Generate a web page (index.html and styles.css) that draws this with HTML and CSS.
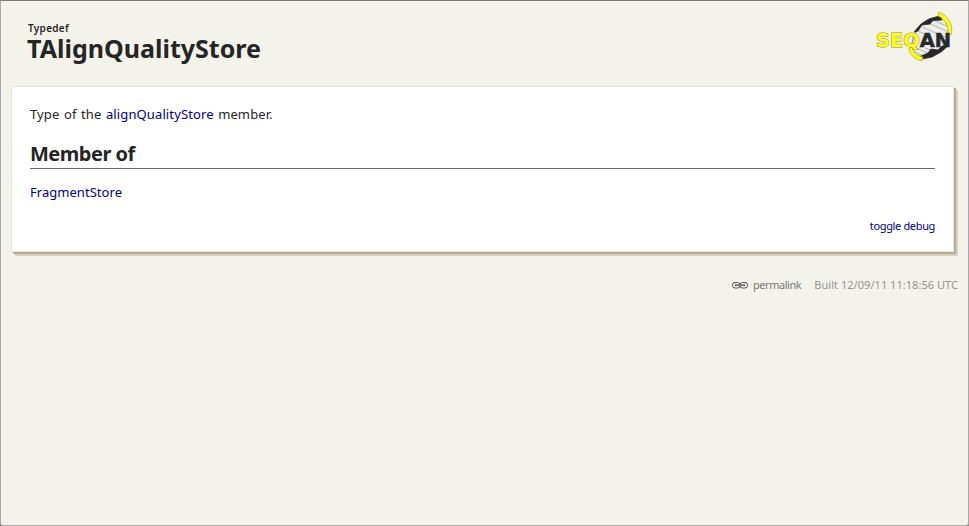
FILE: index.html
```
<!DOCTYPE html>
<html lang="en">
<head>
<meta charset="utf-8">
<title>TAlignQualityStore</title>
<link rel="stylesheet" href="styles.css">
</head>
<body>
<header class="header">
  <div class="titles">
    <div class="kind">Typedef</div>
    <h1 class="title">TAlignQualityStore</h1>
  </div>
  <svg class="logo" width="80" height="52" viewBox="0 0 80 52" role="img" aria-label="SeqAn">
    <path d="M38 42C35 32 38 20 47 12C55 5 64 3 71 7C77 17 74 30 64 38C56 44 45 47 38 42Z" fill="#ededeb" stroke="#666" stroke-width=".8"/>
    <g stroke="#aaa" stroke-width=".9" fill="none">
      <path d="M58 8L74 15M53 11L74 20M47 15L70 25M43 19L56 25M38 34L56 43M39 39L50 45M50 36L62 40"/>
    </g>
    <path d="M39 20L46 12L54 7L65 4L67 8L58 8.5L55 12L47 13L43 19Z" fill="#292829" stroke="#292829" stroke-width=".8"/>
    <path d="M46 44L53 41L56 37L63 38L67 34H73L66 40L57 45L47 47Z" fill="#292829" stroke="#292829" stroke-width=".8"/>
    <path d="M64 0C73 4 79 12 76 23L73 21C74 14 70 7 63 4Z" fill="#ffff16" stroke="#a8a420" stroke-width=".7"/>
    <path d="M37 35C39 42 43 44 48 45L47 49C39 47 34 42 34 36Z" fill="#ffff16" stroke="#a8a420" stroke-width=".7"/>
    <text class="logo-text" x="1" y="35" textLength="75" lengthAdjust="spacingAndGlyphs"><tspan class="logo-seq">SEQ</tspan><tspan class="logo-an">AN</tspan></text>
  </svg>
</header>
<main class="card">
  <p class="intro">Type of the <a href="#">alignQualityStore</a> member.</p>
  <h2 class="section">Member of</h2>
  <p class="member"><a href="#">FragmentStore</a></p>
  <p class="debug"><a href="#">toggle debug</a></p>
</main>
<footer class="footer">
  <a class="permalink" href="#">
    <svg width="16" height="8" viewBox="0 0 16 8" aria-hidden="true">
      <rect x=".5" y="1.5" width="7.5" height="5.5" rx="2.5" fill="none" stroke="#555" stroke-width="1"/>
      <rect x="8" y="1.5" width="7.5" height="5.5" rx="2.5" fill="none" stroke="#555" stroke-width="1"/>
      <path d="M3 4.2H13" stroke="#555" stroke-width="1.8"/>
      <path d="M4 4.2H12" stroke="#ccc" stroke-width=".5"/>
    </svg>
    <span>permalink</span>
  </a>
  <span class="built">Built 12/09/11 11:18:56 UTC</span>
</footer>
</body>
</html>
```

FILE: styles.css
```
* { box-sizing: border-box; }
html { background: #777; }
body {
  margin: 0;
  height: 526px;
  border: 1px solid #aaa8a8;
  border-top-color: #7d797b;
  border-radius: 0 0 3px 3px;
  background: #f4f3eb;
  color: #252525;
  font-family: "Noto Sans", "Open Sans", sans-serif;
  font-size: 13px;
  white-space: nowrap;
}
h1, h2, p { margin: 0; }
a { color: #00008b; text-decoration: none; }
.header {
  display: flex;
  justify-content: space-between;
  height: 85px;
  padding: 11px 12px 0 26px;
}
.kind {
  margin-top: 8px;
  padding-left: 1px;
  font-size: 10px;
  font-weight: 600;
  line-height: 16px;
  letter-spacing: .3px;
}
.title {
  font-size: 25px;
  line-height: 25px;
  font-weight: 700;
}
.logo { margin-right: 1px; }
.logo-text {
  font-family: "DejaVu Sans", sans-serif;
  font-size: 20px;
  font-weight: 700;
}
.logo-seq {
  fill: #ffff16;
  stroke: #8f8b30;
  stroke-width: 1px;
  paint-order: stroke;
}
.logo-an {
  fill: #292829;
  stroke: #292829;
  stroke-width: .6px;
}
.card {
  width: 943px;
  height: 166px;
  margin-left: 10px;
  padding: 17px 18px 0;
  border: 1px solid #e5e5de;
  background: #fff;
  box-shadow: 2px 2px #b8ad90, 4px 4px #d6d0bc;
}
.intro {
  line-height: 20px;
  letter-spacing: .12px;
  word-spacing: 1px;
}
.section {
  margin-top: 16px;
  height: 29px;
  border-bottom: 1px solid #6b676b;
  font-size: 20px;
  line-height: 28px;
  letter-spacing: -.5px;
}
.member {
  margin-top: 13px;
  line-height: 20px;
  letter-spacing: .04px;
}
.debug {
  margin-top: 16px;
  font-size: 11px;
  line-height: 16px;
  letter-spacing: -.35px;
  text-align: right;
}
.footer {
  display: flex;
  justify-content: flex-end;
  gap: 13px;
  margin-top: 25px;
  padding-right: 10px;
  font-size: 11px;
  line-height: 16px;
  color: #929292;
}
.permalink {
  display: flex;
  align-items: center;
  gap: 5px;
  color: #777;
  letter-spacing: -.45px;
}
.built { letter-spacing: .04px; }
```
